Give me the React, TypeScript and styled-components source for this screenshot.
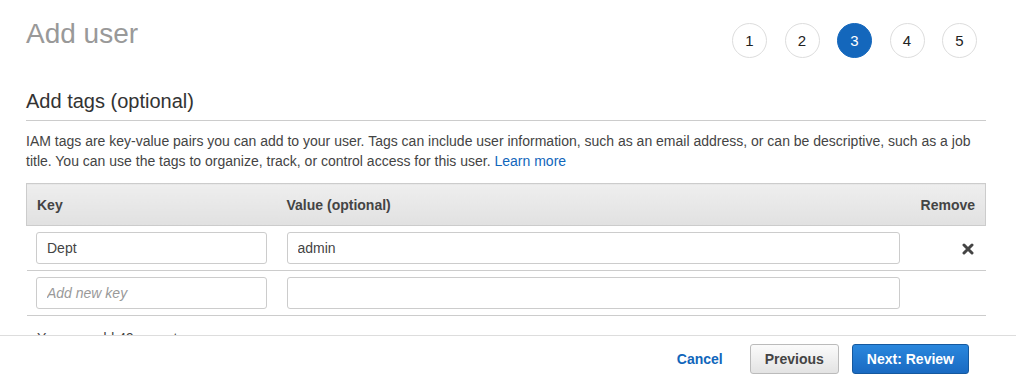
import styled, { createGlobalStyle, css } from 'styled-components';

const GlobalStyle = createGlobalStyle`
  html, body {
    margin: 0;
    padding: 0;
    background: #ffffff;
    font-family: "Liberation Sans", Arial, sans-serif;
    color: #444444;
  }
  * {
    box-sizing: border-box;
  }
`;

const Page = styled.div`
  padding: 18px 30px 0 26px;
`;

const TopBar = styled.div`
  display: flex;
  justify-content: space-between;
  align-items: flex-start;
`;

const PageTitle = styled.h1`
  margin: 0;
  font-size: 28px;
  line-height: 32px;
  font-weight: normal;
  color: #999999;
`;

const Steps = styled.ol`
  display: flex;
  gap: 17.5px;
  list-style: none;
  margin: 5px 9px 0 0;
  padding: 0;
`;

const Step = styled.li<{ $active?: boolean }>`
  width: 35px;
  height: 35px;
  border-radius: 50%;
  display: flex;
  align-items: center;
  justify-content: center;
  font-size: 15px;
  border: 1px solid #dddddd;
  color: #222222;
  background: #ffffff;

  ${({ $active }) =>
    $active &&
    css`
      background: #1467bc;
      border-color: #1467bc;
      color: #ffffff;
    `}
`;

const SectionTitle = styled.h2`
  margin: 31px 0 0;
  padding-bottom: 7px;
  font-size: 20px;
  line-height: 24px;
  font-weight: normal;
  color: #333333;
  border-bottom: 1px solid #cccccc;
`;

const Description = styled.p`
  margin: 10px 0 0;
  font-size: 14px;
  line-height: 20px;
  color: #444444;
`;

const Link = styled.a`
  color: #1166bb;
  text-decoration: none;
`;

const TagsTable = styled.table`
  width: 100%;
  margin-top: 12px;
  border-collapse: collapse;
  font-size: 14px;
`;

const HeadCell = styled.th<{ $align?: 'left' | 'right' }>`
  height: 42px;
  padding: 0 10px;
  text-align: ${({ $align }) => $align ?? 'left'};
  font-weight: bold;
  color: #444444;
  background: linear-gradient(#eeeeee, #e1e1e1);
  border-top: 1px solid #cccccc;
  border-bottom: 1px solid #cccccc;

  &:first-child {
    border-left: 1px solid #cccccc;
  }
  &:last-child {
    border-right: 1px solid #cccccc;
  }
`;

const Row = styled.tr`
  border-bottom: 1px solid #cccccc;
`;

const Cell = styled.td<{ $width?: number; $align?: 'left' | 'right' }>`
  padding: 6px 10px 6px;
  height: 45px;
  text-align: ${({ $align }) => $align ?? 'left'};
  ${({ $width }) => $width && `width: ${$width}px;`}

  &:first-child {
    padding-left: 9.5px;
  }
`;

const TextInput = styled.input`
  display: block;
  width: 100%;
  height: 32px;
  padding: 0 10px;
  border: 1px solid #cccccc;
  border-radius: 3px;
  font-family: inherit;
  font-size: 14px;
  color: #444444;
  background: #ffffff;

  &::placeholder {
    color: #999999;
    font-style: italic;
  }
`;

const RemoveButton = styled.button`
  border: 0;
  background: none;
  padding: 0;
  margin-right: 2px;
  cursor: pointer;
  display: inline-flex;
  vertical-align: middle;
`;

const TagsLeft = styled.p`
  margin: 12px 0 0 11px;
  font-size: 14px;
  line-height: 20px;
  color: #444444;
`;

const Footer = styled.footer`
  position: fixed;
  left: 0;
  right: 0;
  bottom: 0;
  height: 45px;
  background: #ffffff;
  border-top: 1px solid #dddddd;
  display: flex;
  align-items: center;
  justify-content: flex-end;
  padding: 1px 47px 0 0;
  gap: 13px;
`;

const CancelLink = styled.a`
  font-size: 14px;
  font-weight: bold;
  color: #1166bb;
  text-decoration: none;
  margin-right: 14px;
`;

const Button = styled.button<{ $primary?: boolean }>`
  height: 30px;
  padding: 0 14px;
  border-radius: 3px;
  font-family: inherit;
  font-size: 14px;
  font-weight: bold;
  cursor: pointer;
  border: 1px solid #bbbbbb;
  color: #444444;
  background: linear-gradient(#fbfbfb, #e3e3e3);

  ${({ $primary }) =>
    $primary &&
    css`
      border-color: #15599f;
      color: #ffffff;
      background: linear-gradient(#2a87dd, #1a6ac2);
    `}
`;

function RemoveIcon() {
  return (
    <svg width="12" height="12" viewBox="0 0 12 12" aria-hidden="true">
      <path
        d="M2 2 L10 10 M10 2 L2 10"
        stroke="#444444"
        strokeWidth="3"
        strokeLinecap="round"
      />
    </svg>
  );
}

const tags = [{ key: 'Dept', value: 'admin' }];

function App() {
  return (
    <>
      <GlobalStyle />
      <Page>
        <TopBar>
          <PageTitle>Add user</PageTitle>
          <Steps>
            {[1, 2, 3, 4, 5].map((n) => (
              <Step key={n} $active={n === 3}>
                {n}
              </Step>
            ))}
          </Steps>
        </TopBar>

        <SectionTitle>Add tags (optional)</SectionTitle>
        <Description>
          IAM tags are key-value pairs you can add to your user. Tags can include user information,
          such as an email address, or can be descriptive, such as a job title. You can use the tags
          to organize, track, or control access for this user. <Link href="#">Learn more</Link>
        </Description>

        <TagsTable>
          <thead>
            <tr>
              <HeadCell>Key</HeadCell>
              <HeadCell>Value (optional)</HeadCell>
              <HeadCell $align="right">Remove</HeadCell>
            </tr>
          </thead>
          <tbody>
            {tags.map((tag) => (
              <Row key={tag.key}>
                <Cell $width={250}>
                  <TextInput defaultValue={tag.key} />
                </Cell>
                <Cell>
                  <TextInput defaultValue={tag.value} />
                </Cell>
                <Cell $width={76} $align="right">
                  <RemoveButton aria-label="Remove">
                    <RemoveIcon />
                  </RemoveButton>
                </Cell>
              </Row>
            ))}
            <Row>
              <Cell $width={250}>
                <TextInput placeholder="Add new key" />
              </Cell>
              <Cell>
                <TextInput />
              </Cell>
              <Cell $width={76} />
            </Row>
          </tbody>
        </TagsTable>

        <TagsLeft>You can add 49 more tags.</TagsLeft>
      </Page>

      <Footer>
        <CancelLink href="#">Cancel</CancelLink>
        <Button>Previous</Button>
        <Button $primary>Next: Review</Button>
      </Footer>
    </>
  );
}

export default App;
